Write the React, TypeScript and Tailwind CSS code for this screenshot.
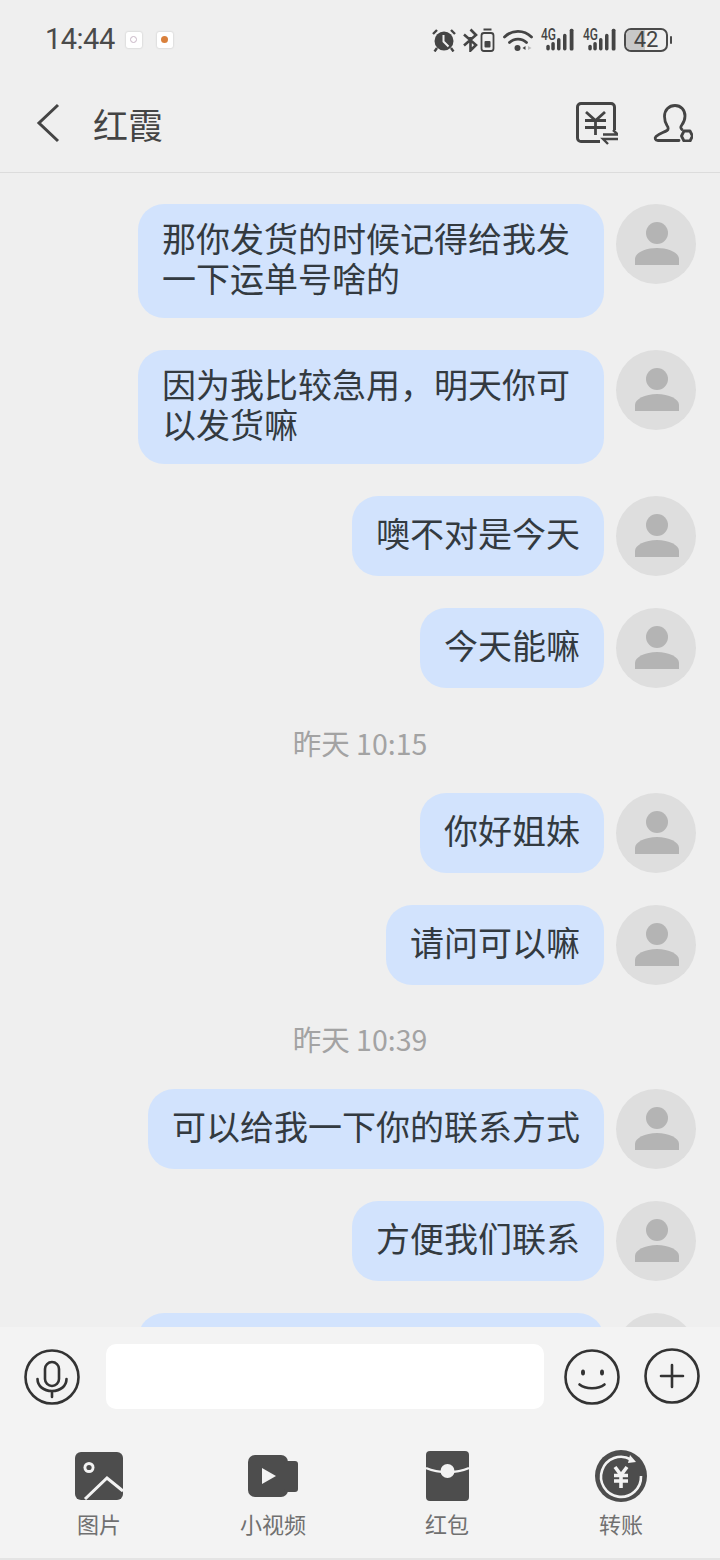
import React from 'react';

const FONT = '"Noto Sans CJK SC", "Noto Sans", sans-serif';

function Avatar() {
    return (
        <div className="w-20 h-20 shrink-0 rounded-full bg-[#dedede] flex items-center justify-center pl-[2px]">
            <svg width="44" height="44" viewBox="0 0 44 44">
                <circle cx="22" cy="11" r="11" fill="#b4b4b4" />
                <path d="M0 43v-6c0-6 10-11 22-11s22 5 22 11v6z" fill="#b4b4b4" />
            </svg>
        </div>
    );
}

function Bubble({ lines, w }: { lines: string[]; w?: string }) {
    return (
        <div className="shrink-0 flex justify-end items-start gap-3 pr-6">
            <div className={`min-h-20 rounded-[26px] bg-[#d2e3fd] px-6 pt-[14px] pb-[20px] flex flex-col justify-center text-[34px] leading-[40px] text-[#333a40] ${w ?? ''}`}>
                {lines.map((l) => (
                    <div key={l} className="whitespace-nowrap">{l}</div>
                ))}
            </div>
            <Avatar />
        </div>
    );
}

function Stamp({ text, h }: { text: string; h: string }) {
    return <div className={`shrink-0 flex items-center justify-center pt-[5px] text-[28.500px] leading-none text-[#a3a3a3] ${h}`}>{text}</div>;
}

function Signal() {
    return (
        <svg width="33" height="24" viewBox="0 0 33 24" fill="none" className="overflow-visible">
            <text x="0" y="12" fontSize="16.500" fontWeight="500" fill="#444" fontFamily="Roboto, sans-serif" textLength="15" lengthAdjust="spacingAndGlyphs">4G</text>
            <rect x="5.300" y="16.700" width="3.500" height="5.800" rx="1.700" fill="#444" />
            <rect x="10.300" y="14" width="3.500" height="8.500" rx="1.700" fill="#444" />
            <rect x="16" y="10" width="3.500" height="12.500" rx="1.700" fill="#444" />
            <rect x="22" y="5.700" width="3.500" height="16.800" rx="1.700" fill="#444" />
            <rect x="28.700" y="0.700" width="3.800" height="21.800" rx="1.500" fill="#444" />
        </svg>
    );
}

function StatusBar() {
    return (
        <div className="h-[76px] shrink-0 flex items-center pl-[45px] pr-[48px] pt-[3px]">
            <span className="text-[29px] leading-none text-[#4a4a4a] tracking-[-0.5px]" style={{ fontFamily: 'Roboto, sans-serif' }}>14:44</span>
            <div className="ml-[11px] w-4 h-4 bg-white rounded-[2px] shadow-[0_0_2px_#bbb] flex items-center justify-center">
                <div className="w-[7px] h-[7px] rounded-full border border-[#c9b6c6]" />
            </div>
            <div className="ml-[15px] w-4 h-4 bg-white rounded-[2px] shadow-[0_0_2px_#bbb] flex items-center justify-center">
                <div className="w-[7px] h-[7px] rounded-full bg-[#d9803c]" />
            </div>
            <div className="ml-auto flex items-center">
                {/* alarm */}
                <svg width="24" height="24" viewBox="0 0 24 24" className="mr-[7px]">
                    <circle cx="12" cy="13" r="9.500" fill="#444" />
                    <path d="M11.500 7v6.500l5 5" stroke="#eee" strokeWidth="2" fill="none" />
                    <path d="M1 6l4-4M23 6l-4-4" stroke="#444" strokeWidth="2.400" fill="none" />
                    <path d="M5 20l-2.500 3.500M19 20l2.500 3.500" stroke="#444" strokeWidth="2.400" fill="none" />
                </svg>
                {/* bluetooth + vibrate */}
                <svg width="32" height="24" viewBox="0 0 32 24" fill="none" className="mr-2">
                    <path d="M1 6.500l12 10.500-5.500 5.500V9M7.500 1.500l5.500 5.500L1 17.500" stroke="#444" strokeWidth="2.600" />
                    <rect x="18.500" y="5" width="12" height="18" rx="2.500" stroke="#444" strokeWidth="1.800" />
                    <path d="M20.500 1.500h8" stroke="#444" strokeWidth="2" />
                    <rect x="21.500" y="13" width="6" height="6.500" rx="1" fill="#444" />
                </svg>
                {/* wifi */}
                <svg width="30" height="24" viewBox="0 0 30 24" fill="none" className="mr-2">
                    <path d="M1.500 9c7.500-7.500 19.500-7.500 27 0" stroke="#444" strokeWidth="2.800" strokeLinecap="round" />
                    <path d="M6.500 14.500c4.500-4.500 12.500-4.500 17 0" stroke="#444" strokeWidth="2.800" strokeLinecap="round" />
                    <circle cx="14.500" cy="20" r="3" fill="#444" />
                    <path d="M19.500 20l3-2v4z" fill="#444" />
                    <path d="M25 18l3.500 2-3.500 2z" fill="#bbb" />
                </svg>
                <Signal />
                <div className="w-[9px]" />
                <Signal />
                <div className="ml-[8px] relative w-[44px] h-6 rounded-[7px] border-2 border-[#4a4a4a] overflow-hidden flex items-center justify-center">
                    <div className="absolute left-0 top-0 bottom-0 w-[19px] bg-[#c8c8c8]" />
                    <span className="relative text-[22px] leading-none text-[#444]" style={{ fontFamily: 'Roboto, sans-serif' }}>42</span>
                </div>
                <div className="ml-[2px] w-[2px] h-[8px] rounded-[1px] bg-[#4a4a4a]" />
            </div>
        </div>
    );
}

function NavBar() {
    return (
        <div className="h-[97px] shrink-0 flex items-center border-b border-[#dcdcdc] pb-[2px]">
            <svg width="24" height="40" viewBox="0 0 24 40" fill="none" className="ml-[36px]">
                <path d="M22 2L3 20l19 18" stroke="#444" strokeWidth="3" />
            </svg>
            <span className="ml-[33px] text-[35px] leading-none text-[#444]">红霞</span>
            <svg width="42" height="43" viewBox="0 0 42 43" fill="none" className="ml-auto mr-[35px]">
                <path d="M24 39.500H5A3.500 3.500 0 0 1 1.500 36V5A3.500 3.500 0 0 1 5 1.500h30A3.500 3.500 0 0 1 38.500 5v23" stroke="#444" strokeWidth="3" />
                <path d="M10 10l9.500 8.500L29 10M9 18.500h21M9 25.500h21M19.500 18.500V33" stroke="#444" strokeWidth="2.800" />
                <path d="M27 32.500h15l-5-4.500M42 37H27l5 5" stroke="#444" strokeWidth="2.400" />
            </svg>
            <svg width="40" height="38" viewBox="0 0 40 38" fill="none" className="mr-[27px]">
                <path d="M26 36.500H5c-3 0-3.500-2.500-2-4 3-3 8-4 11-6 1.500-1 1.500-3 0-5-1.500-2.500-2.500-5.500-2.500-9C11.500 6 16 1.500 22 1.500S32 6 32 12c0 3.500-1.500 7-3.500 9.500-1 1.500-1 3 .5 4" stroke="#444" strokeWidth="2.800" strokeLinecap="round" strokeLinejoin="round" />
                <path d="M31 27h6l2.500 5-2.500 5h-6l-2.500-5z" stroke="#444" strokeWidth="2.800" strokeLinejoin="round" />
            </svg>
        </div>
    );
}

function CircleIcon({ children }: { children: React.ReactNode }) {
    return (
        <svg width="56" height="56" viewBox="0 0 56 56" fill="none" stroke="#333" strokeWidth="2.600" strokeLinecap="round" className="shrink-0">
            <circle cx="28" cy="28" r="26.500" />
            {children}
        </svg>
    );
}

function Tool({ label, children }: { label: string; children: React.ReactNode }) {
    return (
        <div className="w-[174px] flex flex-col items-center">
            <div className="h-[50px] flex items-center justify-center">{children}</div>
            <div className="mt-2 text-[22px] leading-[28px] text-[#707070]">{label}</div>
        </div>
    );
}

export default function App() {
    return (
        <div className="w-[720px] h-[1560px] flex flex-col bg-[#efefef] overflow-hidden" style={{ fontFamily: FONT }}>
            <StatusBar />
            <NavBar />
            <div className="flex-1 min-h-0 overflow-hidden pt-[31px] flex flex-col gap-8">
                <Bubble lines={['那你发货的时候记得给我发', '一下运单号啥的']} w="w-[466px]" />
                <Bubble lines={['因为我比较急用，明天你可', '以发货嘛']} w="w-[466px]" />
                <Bubble lines={['噢不对是今天']} />
                <Bubble lines={['今天能嘛']} />
                <Stamp text="昨天 10:15" h="h-[41px]" />
                <Bubble lines={['你好姐妹']} />
                <Bubble lines={['请问可以嘛']} />
                <Stamp text="昨天 10:39" h="h-[40px]" />
                <Bubble lines={['可以给我一下你的联系方式']} />
                <Bubble lines={['方便我们联系']} />
                <Bubble lines={['\u00a0']} w="w-[466px]" />
            </div>
            <div className="h-[233px] shrink-0 bg-[#f3f3f3] border-b-2 border-[#e4e4e4]">
                <div className="flex items-center pt-[17px] pl-6 pr-5">
                    <CircleIcon>
                        <rect x="21" y="13" width="14" height="24" rx="7" />
                        <path d="M13.500 30c0 7 6 12 14.500 12s14.500-5 14.500-12M28 42v6" />
                    </CircleIcon>
                    <div className="ml-[26px] w-[438px] h-[65px] rounded-[10px] bg-white" />
                    <div className="ml-5">
                        <CircleIcon>
                            <ellipse cx="19" cy="23.500" rx="2" ry="3" fill="#333" stroke="none" />
                            <ellipse cx="38" cy="23.500" rx="2" ry="3" fill="#333" stroke="none" />
                            <path d="M15.500 35.500c6 5 19 5 25 0" />
                        </CircleIcon>
                    </div>
                    <div className="ml-6 -mt-[1px]">
                        <CircleIcon>
                            <path d="M17 28h22M28 17v22" />
                        </CircleIcon>
                    </div>
                </div>
                <div className="flex pl-3 mt-[42px]">
                    <Tool label="图片">
                        <svg width="48" height="48" viewBox="0 0 48 48">
                            <rect width="48" height="48" rx="6" fill="#4d4d4d" />
                            <circle cx="14" cy="15.500" r="5.500" fill="#f3f3f3" />
                            <circle cx="14" cy="15.500" r="2.600" fill="#4d4d4d" />
                            <path d="M10 47l22-21 16 13" stroke="#f3f3f3" strokeWidth="3" fill="none" />
                        </svg>
                    </Tool>
                    <Tool label="小视频">
                        <svg width="50" height="42" viewBox="0 0 50 42">
                            <rect width="40" height="42" rx="7" fill="#4d4d4d" />
                            <rect x="36" y="6" width="14" height="31" rx="3" fill="#4d4d4d" />
                            <path d="M14 13l14 8-14 8z" fill="#f3f3f3" />
                        </svg>
                    </Tool>
                    <Tool label="红包">
                        <svg width="43" height="50" viewBox="0 0 43 50">
                            <rect width="43" height="50" rx="4" fill="#4d4d4d" />
                            <path d="M0 17c7 3 14 4 21.500 4S36 20 43 17" stroke="#f3f3f3" strokeWidth="2.400" fill="none" />
                            <circle cx="21.500" cy="20" r="7" fill="#f3f3f3" />
                        </svg>
                    </Tool>
                    <Tool label="转账">
                        <svg width="52" height="52" viewBox="0 0 52 52">
                            <circle cx="26" cy="26" r="26" fill="#4d4d4d" />
                            <path d="M36 9.500a20 20 0 1 0 10 16.500" stroke="#f3f3f3" strokeWidth="2.600" fill="none" />
                            <path d="M35 5l6 7-8 1z" fill="#f3f3f3" />
                            <path d="M20 17l6 8 6-8M19 25.500h14M19 31h14M26 25v13" stroke="#f3f3f3" strokeWidth="3.600" fill="none" />
                        </svg>
                    </Tool>
                </div>
            </div>
        </div>
    );
}
